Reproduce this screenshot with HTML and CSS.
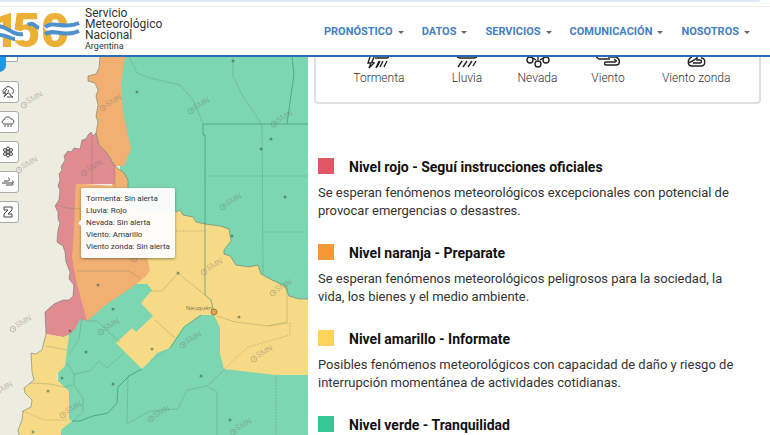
FILE: index.html
```html
<!DOCTYPE html>
<html lang="es">
<head>
<meta charset="utf-8">
<meta name="viewport" content="width=device-width, initial-scale=1">
<title>Servicio Meteorológico Nacional - Alertas</title>
<link rel="stylesheet" href="styles.css">
</head>
<body>
<div class="topstrip"></div>
<header class="header">
  <a class="brand" href="#">
    <svg class="brand-mark" viewBox="0 9 80 38" aria-hidden="true">
      <g class="digits"><text x="-9" y="45">1</text><text x="12" y="45">5</text><text x="41" y="45">0</text></g>
      <path class="wave-white" d="M46 28C55 22 63 33 80 25M-2 29C8 28 13 37 23 34"/>
      <path class="wave" d="M28 23C33 19 35 25 39 26M45 25C54 18 64 28 79 21M45 32C54 26 64 36 79 29M-2 24C8 24 12 34 23 32M-2 33C6 32 10 37 15 37"/>
    </svg>
    <span class="brand-name">Servicio<br>Meteorológico<br>Nacional<small>Argentina</small></span>
  </a>
  <nav class="nav">
    <button type="button">PRONÓSTICO</button>
    <button type="button">DATOS</button>
    <button type="button">SERVICIOS</button>
    <button type="button">COMUNICACIÓN</button>
    <button type="button">NOSOTROS</button>
  </nav>
</header>
<main class="main">
  <section class="map" aria-label="Mapa de alertas">
    <svg class="map-canvas" viewBox="0 57 308 378" preserveAspectRatio="xMinYMin slice">
      <defs>
        <g id="mark"><circle r="2.8"/><path d="M0-1.5V0H1.5"/><text x="4" y="1" transform="rotate(-28)">SMN</text></g>
      </defs>
      <path class="green" d="M120 57H308V435H58V370L62 330 84 310 120 180Z"/>
      <path class="yellow" d="M140 212H176L180 210 183 215 193 217 196 222 205 224 220 226 229 229 231 241 224 250 224 254 230 256 236 265 249 267 258 265 261 274 272 280 285 286 289 296 299 299 308 299V375H275L224 369 220 354V328L214 315H201L184 327 175 340 170 348 157 353 150 361 142 369 116 343 132 328 136 332 153 316 141 303 152 290 147 284 136 284Z"/>
      <path class="orange" d="M76 184H84L128 187 140 220 145 247 150 270 147 275 139 282 128 290 113 300 107 304 87 321 74 290 68 250Z"/>
      <path class="orange" d="M100 57 99 68 96 74 88 76 88 81 95 83 98 90 96 96 98 105 96 116 98 122 96 133 99 145 107 153 115 166 124 173 128 180V190H112V160L115 166H124L131 149 123 112 121 84 125 57Z"/>
      <path class="red" d="M96 133 93 136 91 132 88 135 86 139 82 140 80 149 74 148 71 152 68 151 64 156 65 160 61 167 62 170 59 174 60 180 58 186 60 190 59 200 55 206 58 212 58 219 60 223 58 230 57 242 63 246 65 252 66 262 70 272 69 279 74 285 73 296 69 300 63 300 54 304 45 312 46 334 63 337 70 334 75 329 80 319 87 321 77 284 72 258 74 229 75 200 76 184H115V166L107 153 99 145Z"/>
      <path class="yellow" d="M46 334 42 350 36 354 31 353 32 372 34 380 24 388 25 393 32 400 31 407 23 411 22 420 18 430 19 435H61V430L72 421 69 419V391L57 380V374L65 366 69 335 63 337Z"/>
      <path class="coast" d="M100 57 99 68 96 74 88 76 88 81 95 83 98 90 96 96 98 105 96 116 98 122 96 133 93 136 91 132 88 135 86 139 82 140 80 149 74 148 71 152 68 151 64 156 65 160 61 167 62 170 59 174 60 180 58 186 60 190 59 200 55 206 58 212 58 219 60 223 58 230 57 242 63 246 65 252 66 262 70 272 69 279 74 285 73 296 69 300 63 300 54 304 45 312 46 334 42 350 36 354 31 353 32 372 34 380 24 388 25 393 32 400 31 407 23 411 22 420 18 430 19 435M176 212 180 210 183 215 193 217 196 222 205 224 220 226 229 229 231 241 224 250 224 254 230 256 236 265 249 267 258 265 261 274 272 280 285 286 289 296 299 299 308 299M96 133 99 145 107 153 115 166 124 173 128 180V190"/>
      <path class="province" d="M308 124H203V135H205V295L211 300 214 313M292 57 294 75 290 102 287 124M142 369 129 376 118 387 117 403 108 413 93 416 80 421 72 421M170 348 184 327 201 315"/>
      <path class="district" d="M129 57 137 73 150 78 180 85 193 100 203 123M233 57V76L242 95 255 114 262 126 263 274M92 137V184M115 166V188M56 205 67 208 80 209M77 271H129L140 278M150 291H162L178 273 205 295M46 346 67 350M30 383 50 384 64 387 73 385M82 317 79 339 69 354M87 321H97L112 335 120 342M67 363 74 374 90 371 99 361 107 368 124 353M74 374V385L83 398V412L73 421M128 375 127 424M127 424 150 411 178 409 187 390 207 386 224 370M155 320 175 338M217 316 235 322 268 326 287 322V286M207 386 217 392V435"/>
      <path class="dotted" d="M205 176H308M263 232H308M176 231H205M224 369 248 347 290 335V323L268 326M276 376V435M150 361 170 348M22 411 44 420 68 420"/>
      <g class="dots">
        <circle cx="137" cy="92" r="1.5"/><circle cx="233" cy="61" r="1.5"/><circle cx="271" cy="139" r="1.5"/><circle cx="261" cy="149" r="1.5"/><circle cx="285" cy="197" r="1.5"/><circle cx="232" cy="236" r="1.5"/><circle cx="98" cy="285" r="1.5"/><circle cx="113" cy="309" r="1.5"/><circle cx="70" cy="331" r="1.5"/><circle cx="86" cy="352" r="1.5"/><circle cx="62" cy="378" r="1.5"/><circle cx="48" cy="391" r="1.5"/><circle cx="113" cy="384" r="1.5"/><circle cx="33" cy="432" r="1.5"/><circle cx="152" cy="349" r="1.5"/><circle cx="178" cy="273" r="1.5"/><circle cx="239" cy="317" r="1.5"/><circle cx="201" cy="376" r="1.5"/><circle cx="230" cy="420" r="1.5"/>
      </g>
      <g class="marks">
        <use href="#mark" x="24" y="105"/><use href="#mark" x="103" y="108"/><use href="#mark" x="191" y="111"/><use href="#mark" x="274" y="124"/><use href="#mark" x="19" y="170"/><use href="#mark" x="84" y="173"/><use href="#mark" x="223" y="207"/><use href="#mark" x="134" y="259"/><use href="#mark" x="204" y="272"/><use href="#mark" x="273" y="293"/><use href="#mark" x="13" y="329"/><use href="#mark" x="101" y="332"/><use href="#mark" x="183" y="345"/><use href="#mark" x="254" y="359"/><use href="#mark" x="-6" y="395"/><use href="#mark" x="63" y="415"/><use href="#mark" x="151" y="419"/><use href="#mark" x="233" y="432"/>
      </g>
      <circle class="city" cx="214" cy="312" r="3"/>
      <text class="city-name" x="186" y="310">Neuquén</text>
    </svg>
    <div class="zoom-control"></div>
    <div class="pin"></div>
    <div class="layers">
      <button type="button" aria-label="Tormenta"><svg viewBox="0 0 14 14"><path d="M3 9C1 7 2 4 4 4 5 1 9 1 10 3 13 3 13 8 11 9M6 4 3 8H5L3 12 7 8M8 5C6 7 8 10 10 9M9 10 12 12H6"/></svg></button>
      <button type="button" aria-label="Lluvia"><svg viewBox="0 0 14 14"><path d="M3 9C0 8 1 5 3 5 4 1 9 1 10 4 14 4 13 9 11 9ZM4 10V12M7 10V12M10 10V12"/></svg></button>
      <button type="button" aria-label="Nevada"><svg viewBox="0 0 14 14"><circle cx="7" cy="7" r="1.5"/><circle cx="7" cy="3.5" r="1.5"/><circle cx="7" cy="10.5" r="1.5"/><circle cx="4" cy="5" r="1.5"/><circle cx="10" cy="5" r="1.5"/><circle cx="4" cy="9" r="1.5"/><circle cx="10" cy="9" r="1.5"/></svg></button>
      <button type="button" aria-label="Viento"><svg viewBox="0 0 14 14"><path d="M3 6H7C9 6 9 3 7 3M1 8H11C13 8 13 6 11 6M5 10H11C13 10 12 8 11 8"/></svg></button>
      <button type="button" aria-label="Viento zonda"><svg viewBox="0 0 14 14"><path d="M3 2H11V5L7 9H11V12H3V9L7 5H3Z"/></svg></button>
    </div>
    <div class="tooltip" role="tooltip">Tormenta: Sin alerta<br>Lluvia: Rojo<br>Nevada: Sin alerta<br>Viento: Amarillo<br>Viento zonda: Sin alerta</div>
  </section>
  <section class="info">
    <ul class="legend">
      <li><svg viewBox="0 0 24 13"><path d="M3 0 1 6H4L2 11 7 6 5 5 7 0M8 1H20L22 0M12 4 9 11M16 4 13 10M20 4 17 10M13 4 10 10"/></svg>Tormenta</li>
      <li><svg viewBox="0 0 24 13"><path d="M2 0 5 1H19L22 0M7 4 3 10M12 4 8 10M17 4 13 10M21 4 18 9"/></svg>Lluvia</li>
      <li><svg viewBox="0 0 24 13"><circle cx="4" cy="3" r="3"/><circle cx="20" cy="3" r="3"/><circle cx="12" cy="7" r="3"/><path d="M7 1 10 3M17 1 14 3M12 0V3"/></svg>Nevada</li>
      <li><svg viewBox="0 0 24 13"><path d="M0 0 3 2H14M12 0H20C25 2 24 8 20 8H10C8 8 8 5 10 5H19C21 5 20 2 18 3"/></svg>Viento</li>
      <li><svg viewBox="0 0 24 13"><path d="M8 0C3 2 3 9 8 9H17C22 9 22 1 17 1M4 6C8 5 10 3 13 1M9 6H16C18 6 18 3 16 3M13 0V3H16"/></svg>Viento zonda</li>
    </ul>
    <div class="levels">
      <article class="level"><h2><i class="swatch swatch-red"></i>Nivel rojo - Seguí instrucciones oficiales</h2><p>Se esperan fenómenos meteorológicos excepcionales con potencial de provocar emergencias o desastres.</p></article>
      <article class="level"><h2><i class="swatch swatch-orange"></i>Nivel naranja - Preparate</h2><p>Se esperan fenómenos meteorológicos peligrosos para la sociedad, la vida, los bienes y el medio ambiente.</p></article>
      <article class="level"><h2><i class="swatch swatch-yellow"></i>Nivel amarillo - Informate</h2><p>Posibles fenómenos meteorológicos con capacidad de daño y riesgo de interrupción momentánea de actividades cotidianas.</p></article>
      <article class="level"><h2><i class="swatch swatch-green"></i>Nivel verde - Tranquilidad</h2></article>
    </div>
  </section>
</main>
</body>
</html>
```
FILE: styles.css
```css
* { box-sizing: border-box; }
body {
  margin: 0;
  min-height: 100vh;
  display: flex;
  flex-direction: column;
  background: #fff;
  color: #333;
  font-family: Roboto, "Liberation Sans", sans-serif;
}
button { font: inherit; cursor: pointer; }
.topstrip {
  height: 2px;
  margin-right: 10px;
  background: #e1e8f8;
  border-bottom-right-radius: 2px;
}
.header {
  display: flex;
  justify-content: space-between;
  align-items: flex-start;
  margin-top: 4px;
  height: 51px;
  border-top: 1px solid #ececec;
  border-bottom: 2px solid #2a6db5;
}
.brand {
  display: flex;
  align-items: center;
  gap: 5px;
  padding-top: 1px;
  color: #333;
  text-decoration: none;
}
.brand-mark { width: 80px; height: 38px; overflow: visible; }
.digits { fill: #ecb036; font: 900 49px Roboto, sans-serif; }
.wave, .wave-white { fill: none; stroke: #4e91cc; stroke-width: 4; }
.wave-white { stroke: #fff; stroke-width: 8; }
.brand-name { font-size: 12px; line-height: 11px; }
.brand-name small { display: block; font-size: 9px; }
.nav { display: flex; gap: 18px; padding: 17px 20px 0 0; }
.nav button {
  display: flex;
  align-items: center;
  gap: 5px;
  padding: 0;
  border: 0;
  background: none;
  color: #4580c2;
  font-size: 11px;
  font-weight: 700;
  line-height: 16px;
}
.nav button::after {
  content: "";
  border: 3px solid transparent;
  border-top-color: #666;
  border-bottom: 0;
}
.main { flex: 1; display: grid; grid-template-columns: 2fr 3fr; }
.map { position: relative; overflow: hidden; background: #edece0; }
.map-canvas { position: absolute; inset: 0; width: 100%; height: 100%; }
.green { fill: #7cd6b1; }
.yellow { fill: #f6da86; }
.orange { fill: #f1b072; }
.red { fill: #e08b8f; }
.coast, .province, .district, .dotted { fill: none; stroke: #57705f; stroke-opacity: .5; stroke-width: 1; }
.province { stroke: #2f8f6c; stroke-opacity: .6; }
.district { stroke-opacity: .25; }
.dotted { stroke-opacity: .25; stroke-dasharray: 2 1; }
.dots { fill: #345c48; fill-opacity: .55; }
.marks { fill: none; stroke: #777; stroke-opacity: .4; stroke-width: 1; }
#mark text { fill: #777; fill-opacity: .4; stroke: none; font: 8px Roboto, sans-serif; }
.city { fill: #e0a34e; stroke: #a98038; }
.city-name { fill: #80734c; font: 6px "Open Sans", sans-serif; }
.zoom-control {
  position: absolute;
  top: -6px;
  left: -4px;
  width: 22px;
  height: 11px;
  border: 1px solid #aaa;
  border-radius: 2px;
  background: #fff;
}
.pin {
  position: absolute;
  top: 0;
  left: -8px;
  width: 14px;
  height: 15px;
  border-radius: 0 0 8px 8px;
  background: #2196e3;
}
.layers {
  position: absolute;
  top: 24px;
  left: -3px;
  display: grid;
  gap: 8px;
}
.layers button {
  display: grid;
  place-items: center;
  width: 22px;
  height: 22px;
  padding: 0;
  border: 1px solid #aaa;
  border-radius: 3px;
  background: #fff;
}
.layers svg { width: 14px; height: 14px; fill: none; stroke: #444; stroke-width: 1; }
.tooltip {
  position: absolute;
  top: 131px;
  left: 81px;
  padding: 5px;
  border-radius: 2px;
  background: rgba(255, 255, 255, .95);
  box-shadow: 0 1px 3px rgba(0, 0, 0, .4);
  font-size: 8px;
  line-height: 12px;
  white-space: nowrap;
}
.tooltip::before {
  content: "";
  position: absolute;
  top: 32px;
  left: -3px;
  border: 3px solid transparent;
  border-right-color: #fff;
  border-left: 0;
}
.info { padding: 0 9px 0 6px; }
.legend {
  display: grid;
  grid-template-columns: 3fr 2fr 2fr 2fr 3fr;
  margin: 0;
  padding: 0 10px 16px;
  list-style: none;
  border: solid #e0e0e0;
  border-width: 0 2px 2px;
  border-radius: 0 0 4px 4px;
  color: #333;
  font-size: 12px;
  font-weight: 300;
  line-height: 16px;
}
.legend li { display: grid; justify-items: center; }
.legend svg { width: 24px; height: 13px; fill: none; stroke: #222; stroke-width: 1.4; }
.levels { display: grid; gap: 23px; padding: 53px 4px 0; }
.level h2 {
  display: flex;
  align-items: center;
  gap: 15px;
  margin: 0 0 7px;
  color: #111;
  font-size: 14px;
  font-weight: 700;
  line-height: 20px;
}
.level p { max-width: 430px; margin: 0; font-size: 13px; line-height: 18px; }
.level:last-child h2 { margin: 0; }
.swatch { width: 16px; height: 16px; margin-bottom: 2px; }
.swatch-red { background: #df5664; }
.swatch-orange { background: #f59838; }
.swatch-yellow { background: #fdd35b; }
.swatch-green { background: #35c794; }
```
